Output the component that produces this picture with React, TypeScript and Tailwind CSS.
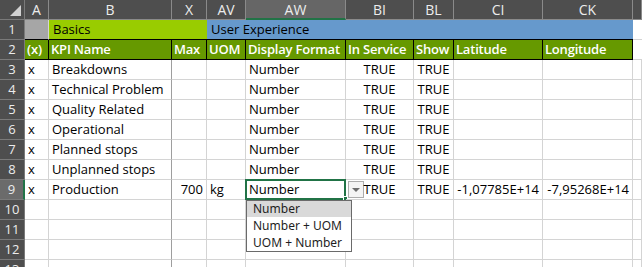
import React from 'react';

type Align = 'l' | 'r' | 'c';

const cols: { key: string; w: string; align: Align }[] = [
  { key: 'A', w: 'w-[24px]', align: 'l' },
  { key: 'B', w: 'w-[123px]', align: 'l' },
  { key: 'X', w: 'w-[35px]', align: 'r' },
  { key: 'AV', w: 'w-[39px]', align: 'l' },
  { key: 'AW', w: 'w-[100px]', align: 'l' },
  { key: 'BI', w: 'w-[68px]', align: 'c' },
  { key: 'BL', w: 'w-[40px]', align: 'c' },
  { key: 'CI', w: 'w-[89px]', align: 'r' },
  { key: 'CK', w: 'w-[90px]', align: 'r' },
  { key: '', w: 'w-[9px]', align: 'l' },
];

const headings = ['(x)', 'KPI Name', 'Max', 'UOM', 'Display Format', 'In Service', 'Show', 'Latitude', 'Longitude'];

const empty = ['', '', '', '', '', '', '', '', '', ''];

const data: string[][] = [
  ['x', 'Breakdowns', '', '', 'Number', 'TRUE', 'TRUE', '', '', ''],
  ['x', 'Technical Problem', '', '', 'Number', 'TRUE', 'TRUE', '', '', ''],
  ['x', 'Quality Related', '', '', 'Number', 'TRUE', 'TRUE', '', '', ''],
  ['x', 'Operational', '', '', 'Number', 'TRUE', 'TRUE', '', '', ''],
  ['x', 'Planned stops', '', '', 'Number', 'TRUE', 'TRUE', '', '', ''],
  ['x', 'Unplanned stops', '', '', 'Number', 'TRUE', 'TRUE', '', '', ''],
  ['x', 'Production', '700', 'kg', 'Number', 'TRUE', 'TRUE', '-1,07785E+14', '-7,95268E+14', ''],
  empty,
  empty,
  empty,
  empty,
];

const alignCls: Record<Align, string> = {
  l: 'text-left',
  r: 'text-right',
  c: 'text-center',
};

function RowHead({ n, active }: { n: number; active?: boolean }) {
  return (
    <div
      className={
        'w-[25px] h-[20px] shrink-0 box-border border-b border-[#7a7a7a] text-center leading-[19px] text-[#ececec] ' +
        (active ? 'bg-[#6b6b6b] border-r-2 border-r-[#217346]' : 'bg-[#4e4e4e] border-r border-r-[#7a7a7a]')
      }
    >
      {n}
    </div>
  );
}

function Dropdown() {
  return (
    <>
      <div className="absolute -left-[1px] -top-[1px] w-[101px] h-[21px] border-2 border-[#217346]" />
      <div className="absolute left-[97px] top-[16px] w-[5px] h-[5px] bg-[#217346] border border-white" />
      <div className="absolute left-[102px] top-[1px] w-[16px] h-[17px] border border-[#acacac] bg-[#f4f4f4] flex items-center justify-center">
        <div className="w-0 h-0 border-l-[4px] border-r-[4px] border-t-[4px] border-l-transparent border-r-transparent border-t-[#6d6d6d]" />
      </div>
      <div className="absolute left-0 top-[20px] w-[106px] h-[52px] bg-white border border-[#6a6a6a] z-10 text-[12px] leading-[17px] text-[#1e1e1e] font-['Noto_Sans',sans-serif]">
        <div className="bg-[#d9d9d9] pl-[6px] h-[16px] leading-[16px]">Number</div>
        <div className="pl-[6px] h-[17px]">Number + UOM</div>
        <div className="pl-[6px] h-[17px]">UOM + Number</div>
      </div>
    </>
  );
}

export default function App() {
  return (
    <div className="w-[642px] h-[267px] overflow-hidden bg-white font-['Open_Sans',sans-serif] text-[13px] text-black">
      {/* column letters */}
      <div className="flex h-[20px] bg-[#4e4e4e] text-[#ececec] text-[14px]">
        <div className="w-[25px] h-[20px] shrink-0 box-border border-r border-b border-[#7a7a7a] relative">
          <div className="absolute right-[3px] bottom-[3px] w-0 h-0 border-b-[11px] border-l-[11px] border-b-[#d2d2d2] border-l-transparent" />
        </div>
        {cols.map((c) => (
          <div
            key={c.key + c.w}
            className={
              c.w +
              ' h-[20px] shrink-0 box-border border-r border-[#8a8a8a] text-center leading-[19px] ' +
              (c.key === 'AW' ? 'bg-[#666666] border-b-2 border-b-[#217346]' : 'border-b')
            }
          >
            {c.key}
          </div>
        ))}
      </div>

      {/* row 1 */}
      <div className="flex h-[20px]">
        <RowHead n={1} />
        <div className="w-[24px] h-[20px] shrink-0 box-border border-r border-[#d4d4d4] border-b border-b-black bg-[#a6a6a6]" />
        <div className="w-[158px] h-[20px] shrink-0 box-border border-b border-black bg-[#99cc00] pl-[4px] leading-[19px]">Basics</div>
        <div className="w-[426px] h-[20px] shrink-0 box-border border-b border-black bg-[#6699cc] pl-[4px] leading-[19px]">User Experience</div>
        <div className="w-[9px] h-[20px] shrink-0 box-border border-b border-[#d4d4d4]" />
      </div>

      {/* row 2 */}
      <div className="flex h-[20px]">
        <RowHead n={2} />
        {headings.map((h, i) => (
          <div
            key={h}
            className={
              cols[i].w +
              ' h-[20px] shrink-0 box-border border-r border-b border-black bg-[#669900] text-white font-semibold tracking-[-0.2px] pl-[2px] leading-[19px] whitespace-nowrap overflow-hidden'
            }
          >
            {h}
          </div>
        ))}
        <div className="w-[9px] h-[20px] shrink-0 box-border border-b border-[#d4d4d4]" />
      </div>

      {/* data rows */}
      {data.map((r, ri) => {
        const n = ri + 3;
        return (
          <div key={n} className="flex h-[20px]">
            <RowHead n={n} active={n === 9} />
            {r.map((v, ci) => (
              <div
                key={ci}
                className={
                  cols[ci].w +
                  ' h-[20px] shrink-0 box-border border-b border-[#d4d4d4] px-[3px] leading-[19px] whitespace-nowrap relative ' +
                  alignCls[cols[ci].align] +
                  (ci === 1 ? ' border-r border-r-[#9e9e9e]' : ' border-r border-r-[#d4d4d4]')
                }
              >
                {v}
                {n === 9 && ci === 4 && <Dropdown />}
              </div>
            ))}
          </div>
        );
      })}
    </div>
  );
}
